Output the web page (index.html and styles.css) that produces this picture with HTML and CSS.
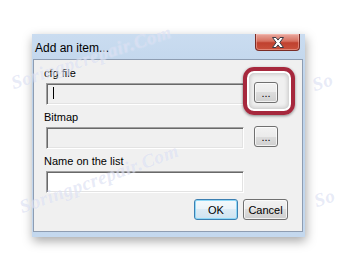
FILE: index.html
```html
<!DOCTYPE html>
<html lang="en">
<head>
    <meta charset="UTF-8">
    <title>Add an item...</title>
    <link rel="stylesheet" href="styles.css">
</head>
<body>

<div class="window">
    <div class="titlebar">
        <span class="title">Add an item...</span>
        <button class="close-btn">
            <svg width="14" height="11" viewBox="0 0 14 11">
                <path d="M1.5 0.5h3.5l2 2.6 2-2.6h3.5l-3.7 5 3.7 5h-3.5l-2-2.6-2 2.6h-3.5l3.7-5z" fill="#fff" stroke="#3b3b45" stroke-width="1" stroke-linejoin="round"/>
            </svg>
        </button>
    </div>

    <div class="client">
        <div class="field-group">
            <label>cfg file</label>
            <div class="field-row">
                <div class="textbox"><span class="caret"></span></div>
                <button class="browse-btn">...</button>
            </div>
        </div>

        <div class="field-group">
            <label>Bitmap</label>
            <div class="field-row">
                <div class="textbox"></div>
                <button class="browse-btn">...</button>
            </div>
        </div>

        <div class="field-group">
            <label>Name on the list</label>
            <div class="field-row">
                <div class="textbox white"></div>
            </div>
        </div>

        <div class="actions">
            <button class="btn btn-default">OK</button>
            <button class="btn">Cancel</button>
        </div>

        <!-- red marker round the first browse button -->
        <div class="highlight"></div>
    </div>
</div>

<!-- site watermark -->
<span class="watermark wm-1">Soringpcrepair.Com</span>
<span class="watermark wm-2">Soringpcrepair.Com</span>
<span class="watermark wm-3">So</span>
<span class="watermark wm-4">So</span>

</body>
</html>
```

FILE: styles.css
```css
body {
    margin: 0;
    width: 338px;
    height: 269px;
    background: #ffffff;
    font-family: "Liberation Sans", Arial, sans-serif;
    font-size: 11px;
    color: #000;
    position: relative;
    overflow: hidden;
}
.window {
    margin: 34px 0 0 32px;
    width: 273px;
    height: 203px;
    box-sizing: border-box;
    padding: 0 2px 5px 1px;
    background: linear-gradient(#cadcf0, #bcd2ea 30%, #c4d8ee);
    box-shadow: 1px 4px 10px rgba(0, 0, 0, 0.35);
    display: flex;
    flex-direction: column;
}
.titlebar {
    height: 25px;
    display: flex;
    justify-content: space-between;
    align-items: flex-start;
}
.title {
    font-size: 12px;
    padding: 7px 0 0 2px;
    color: #000;
}
.close-btn {
    width: 45px;
    height: 17px;
    margin-right: 3px;
    padding: 0;
    border: 1px solid #7a2c26;
    border-top: none;
    border-radius: 0 0 4px 4px;
    background: linear-gradient(#e9a99f, #d6705f 45%, #c0412f 55%, #c9513c);
    box-shadow: inset 0 0 0 1px rgba(255, 200, 190, 0.45);
    display: flex;
    align-items: center;
    justify-content: center;
}
.client {
    position: relative;
    height: 173px;
    box-sizing: border-box;
    border: 1px solid #8e9db2;
    background: #f0f0f0;
    padding: 7px 14px 6px 10px;
}
.field-group {
    margin-bottom: 6px;
}
.field-group label {
    display: block;
    height: 13px;
    line-height: 13px;
    margin-bottom: 3px;
}
.field-row {
    display: flex;
    align-items: flex-start;
    gap: 10px;
}
.textbox {
    width: 198px;
    height: 22px;
    margin-left: 2px;
    box-sizing: border-box;
    border: 1px solid;
    border-color: #a0a0a0 #ffffff #ffffff #a0a0a0;
    box-shadow: inset 1px 1px 0 #696969, inset -1px -1px 0 #e3e3e3;
    background: #f0f0f0;
    display: flex;
    align-items: flex-start;
}
.textbox.white {
    background: #ffffff;
}
.caret {
    width: 1px;
    height: 12px;
    margin: 3px 0 0 6px;
    background: #000;
}
.browse-btn {
    width: 24px;
    height: 21px;
    margin-top: -1px;
    padding: 0 0 3px;
    border: 1px solid #707070;
    border-radius: 3px;
    background: linear-gradient(#f2f2f2, #ebebeb 50%, #dddddd 50%, #cfcfcf);
    box-shadow: inset 0 0 0 1px rgba(255, 255, 255, 0.7);
    font-family: "Liberation Sans", Arial, sans-serif;
    font-size: 11px;
    line-height: 11px;
    display: flex;
    align-items: flex-end;
    justify-content: center;
}
.actions {
    display: flex;
    justify-content: flex-end;
    gap: 5px;
    margin-top: 5px;
}
.btn {
    width: 45px;
    height: 21px;
    padding: 0;
    border: 1px solid #707070;
    border-radius: 3px;
    background: linear-gradient(#f2f2f2, #ebebeb 50%, #dddddd 50%, #cfcfcf);
    box-shadow: inset 0 0 0 1px rgba(255, 255, 255, 0.7);
    font-family: "Liberation Sans", Arial, sans-serif;
    font-size: 11px;
    color: #000;
}
.btn-default {
    width: 44px;
    border-color: #3c7fb1;
    background: linear-gradient(#f4f9fc, #eaf3f9 50%, #dcebf5 50%, #cfe3f0);
    box-shadow: inset 0 0 0 1px #8fd8f7;
}
.highlight {
    position: absolute;
    left: 209px;
    top: 7px;
    width: 52px;
    height: 48px;
    box-sizing: border-box;
    border: 4px solid #a6283d;
    border-radius: 11px;
    box-shadow: 0 1px 3px rgba(0, 0, 0, 0.45), inset 0 0 0 2px #ffffff, inset 0 0 4px 3px rgba(0, 0, 0, 0.18);
}
.watermark {
    position: absolute;
    font-family: "Liberation Serif", serif;
    font-style: italic;
    font-weight: bold;
    font-size: 19px;
    letter-spacing: 0.5px;
    color: rgba(175, 185, 228, 0.3);
    text-shadow: 0 0 1px rgba(255, 255, 255, 0.6);
    transform-origin: left bottom;
    white-space: nowrap;
    pointer-events: none;
}
.wm-1 {
    left: 15px;
    top: 72px;
    transform: rotate(-18deg);
}
.wm-2 {
    left: 24px;
    top: 196px;
    transform: rotate(-20deg);
}
.wm-3 {
    left: 316px;
    top: 74px;
    transform: rotate(-18deg);
}
.wm-4 {
    left: 318px;
    top: 190px;
    transform: rotate(-18deg);
}
```
